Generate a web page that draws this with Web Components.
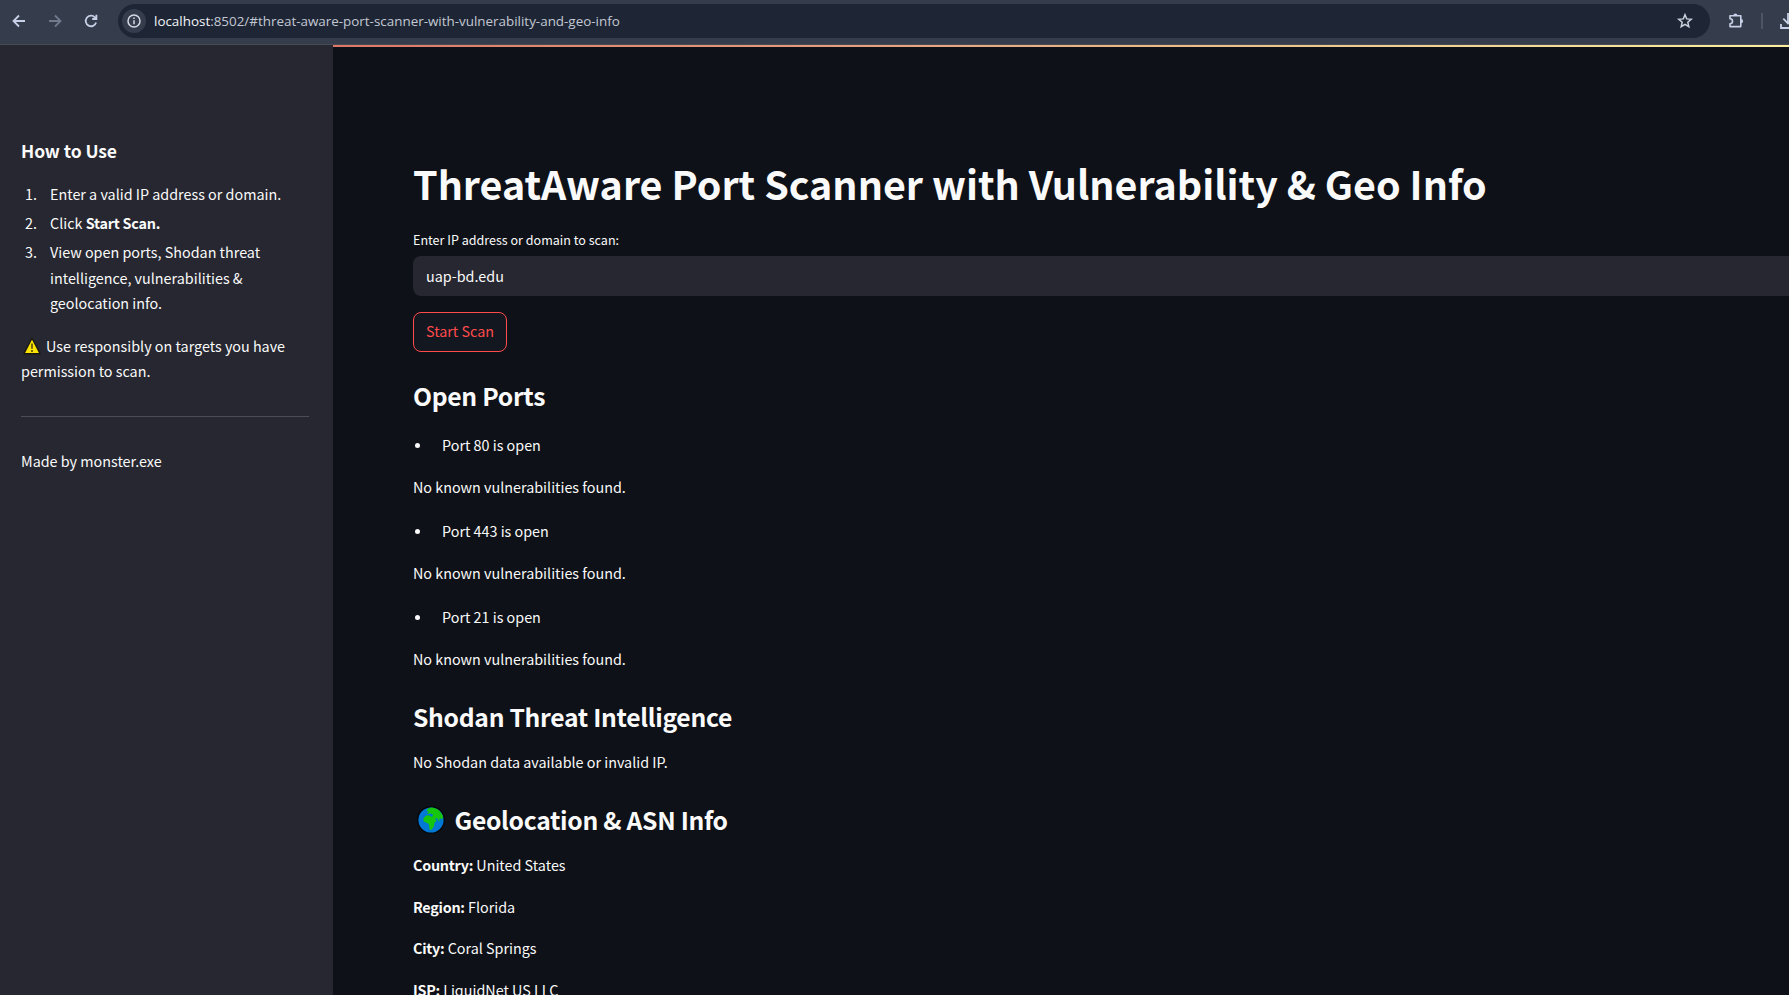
<!DOCTYPE html>
<html lang="en">
<head>
<meta charset="utf-8">
<title>ThreatAware Port Scanner</title>
<style>
html,body{margin:0;height:100%;overflow:hidden;background:#0e1117}
body{font-family:"Noto Sans CJK SC","Noto Sans",sans-serif;color:#fafafa;font-size:14.35px;line-height:26px}
</style>
</head>
<body>
<scan-app></scan-app>
<script>
const define = (name, html) => {
  const t = document.createElement('template');
  t.innerHTML = html;
  customElements.define(name, class extends HTMLElement {
    constructor() { super(); this.attachShadow({mode: 'open'}).append(t.content.cloneNode(true)); }
  });
};

define('browser-bar', `
<style>
:host{display:flex;align-items:center;height:45px;box-sizing:border-box;background:#353d4d;border-bottom:1px solid #464b56;padding-bottom:3px;overflow:hidden}
svg{display:block;flex:none}
.nav{display:flex;gap:18px;padding-left:10px;color:#c7d0e6}
.fwd{color:#717a8c}
.url{display:flex;align-items:center;width:1592px;height:34px;margin-left:18px;border-radius:17px;background:#1e2636;flex:none;box-sizing:border-box;padding:0 16px 0 4px}
.info{display:grid;place-items:center;width:24px;height:24px;border-radius:50%;background:#353d4d;color:#d5d9e4;margin-right:8px}
.txt{flex:1;font:13.42px/20px "Open Sans",sans-serif;color:#c3c8d2;white-space:nowrap}
.txt b{font-weight:400;color:#f2f4f8}
.ext{margin-left:17px;color:#c7d0e6}
.sep{width:2px;height:16px;background:#4d5667;margin-left:16px;flex:none}
.dl{margin-left:16px;color:#c7d0e6}
</style>
<div class="nav">
<svg width="18" height="18" viewBox="0 0 18 18" fill="none" stroke="currentColor" stroke-width="1.8"><path d="M15 9H4M9 3.5 3.5 9 9 14.5"/></svg>
<svg class="fwd" width="18" height="18" viewBox="0 0 18 18" fill="none" stroke="currentColor" stroke-width="1.8"><path d="M3 9h11M9 3.5 14.500 9 9 14.5"/></svg>
<svg width="18" height="18" viewBox="0 0 18 18" fill="none" stroke="currentColor" stroke-width="1.8"><path d="M14.100 10.500A5.300 5.300 0 1 1 12.900 5.300L14.200 6.700M14.400 2.800V7H10.200"/></svg>
</div>
<div class="url">
<span class="info"><svg width="14" height="14" viewBox="0 0 14 14" fill="none" stroke="currentColor" stroke-width="1.5"><circle cx="7" cy="7" r="6"/><path d="M7 6.200v4M7 3.600v1.500"/></svg></span>
<span class="txt"><b>localhost</b>:8502/#threat-aware-port-scanner-with-vulnerability-and-geo-info</span>
<svg width="18" height="18" viewBox="0 0 18 18" fill="none" stroke="#cbd1dd" stroke-width="1.5"><path d="m9 2.800 1.700 4.100 4.500.4-3.400 2.900 1 4.400L9 12.300l-3.800 2.300 1-4.400L2.800 7.300l4.500-.4z"/></svg>
</div>
<svg class="ext" width="18" height="18" viewBox="0 0 18 18"><path d="M3 3.800H13.800V14.600H3V11.700A2.500 2.500 0 0 0 3 6.700Z" fill="none" stroke="currentColor" stroke-width="1.6" stroke-linejoin="round"/><path d="M6.300 3.500a2.100 2.100 0 0 1 4.200 0zM14 7.100a2.100 2.100 0 0 1 0 4.200z" fill="currentColor"/></svg>
<span class="sep"></span>
<svg class="dl" width="18" height="18" viewBox="0 0 18 18" fill="none" stroke="currentColor" stroke-width="1.8"><path d="M9 1v10M4.300 6.700 9 11.400l4.700-4.700M2 12v4h14v-4"/></svg>
`);

define('side-panel', `
<style>
:host{display:block;width:333px;flex:none;box-sizing:border-box;background:#262730;padding:92px 24px 0 21px}
h3{margin:0;font-size:17.5px;line-height:28px;font-weight:700;letter-spacing:-.1px}
ol{list-style:none;margin:16px 0 0;padding:0}
li{display:grid;grid-template-columns:29px 1fr;line-height:25.400px;margin-bottom:3.700px}
li i{font-style:normal;padding-left:4px}
b{font-weight:700;letter-spacing:-.22px}
p{margin:0;line-height:25px;white-space:nowrap}
.warn{margin-top:17.300px}
svg{width:20px;height:20px;vertical-align:-4.500px;margin:0 4px 0 1px}
hr{border:0;height:1px;background:#4b4c54;margin:33px 0 31px}
</style>
<h3>How to Use</h3>
<ol>
<li><i>1.</i><span>Enter a valid IP address or domain.</span></li>
<li><i>2.</i><span>Click <b>Start Scan.</b></span></li>
<li><i>3.</i><span>View open ports, Shodan threat<br>intelligence, vulnerabilities &amp;<br>geolocation info.</span></li>
</ol>
<p class="warn"><svg viewBox="0 0 18 18"><path d="M9 2 16.300 16H1.700Z" fill="#fde300" stroke="#1b1a12" stroke-width="1.300" stroke-linejoin="round"/><path d="M9 6.800v4.600M9 12.700v1.600" stroke="#4e480c" stroke-width="1.400"/></svg>Use responsibly on targets you have<br>permission to scan.</p>
<hr>
<p>Made by monster.exe</p>
`);

define('page-heading', `
<style>
:host{display:block;height:36px;margin-top:var(--gap,23px)}
h2{margin:0;font-size:24.700px;line-height:36px;font-weight:700;letter-spacing:-.3px;white-space:nowrap;display:flex;align-items:center}
::slotted(svg){width:28px;height:28px;margin:2px 9.500px 0 4px}
</style>
<h2><slot></slot></h2>
`);

define('text-line', `
<style>
:host{display:block;line-height:26px;height:26px;margin-top:var(--gap,15.600px);white-space:nowrap}
::slotted(b){font-weight:700;letter-spacing:-.25px}
</style>
<slot></slot>
`);

define('port-result', `
<style>
:host{display:block;margin-top:var(--gap,18.600px)}
.port{display:flex;align-items:center;height:26px}
.port::before{content:"";width:5px;height:5px;border-radius:50%;background:#fafafa;margin:1px 22px 0 2px}
text-line{--gap:15.600px}
</style>
<div class="port"><slot></slot></div>
<text-line>No known vulnerabilities found.</text-line>
`);

define('scan-form', `
<style>
:host{display:block}
label{display:block;margin-top:17px;font-size:12.550px;line-height:20px}
.field{height:40px;margin-top:6px;box-sizing:border-box;padding-left:13px;border-radius:8px 0 0 8px;background:#262730;line-height:39px}
button{display:block;width:94px;height:40px;margin-top:16px;padding:0 0 2px;box-sizing:border-box;border:1px solid #ff4b4b;border-radius:8px;background:#131720;color:#ff4b4b;font:inherit;line-height:36px;white-space:nowrap}
</style>
<label>Enter IP address or domain to scan:</label>
<div class="field">uap-bd.edu</div>
<button>Start Scan</button>
`);

define('scan-app', `
<style>
:host{display:flex;flex-direction:column;height:100vh;overflow:hidden}
.body{display:flex;flex:1;min-height:0}
main{flex:1;min-width:0;padding-left:80px;overflow:hidden}
.line{height:2px;margin-left:-80px;background:linear-gradient(90deg,#dd7867,#e59e7c 35%,#ecc58d 65%,#faf0a0)}
h1{margin:106px 0 0;font-size:39.430px;line-height:60px;font-weight:700;white-space:nowrap}
</style>
<browser-bar></browser-bar>
<div class="body">
<side-panel></side-panel>
<main>
<div class="line"></div>
<h1>ThreatAware Port Scanner with Vulnerability &amp; Geo Info</h1>
<scan-form></scan-form>
<page-heading style="--gap:25px">Open Ports</page-heading>
<port-result style="--gap:19px">Port 80 is open</port-result>
<port-result>Port 443 is open</port-result>
<port-result>Port 21 is open</port-result>
<page-heading style="--gap:26px">Shodan Threat Intelligence</page-heading>
<text-line style="--gap:15px">No Shodan data available or invalid IP.</text-line>
<page-heading style="--gap:26px"><svg viewBox="0 0 28 28"><circle cx="14" cy="14" r="13.300" fill="#0078d4" stroke="#05070b" stroke-width="1.400"/><path d="M10.500 3Q14-.2 20 3q4.500 2.800 6 8l-.8 2.500-2.400-1.600-.7 4.100-2.100-4-2.200.9 2 1.600-2.200 2.300-.8 3.700-2.500 3.500-1.700-.5-.8-5.500-2.800-1.600-2.300-1-.4-3 2.500-2.700 3.200-.4 2.800 1.600 1.500-2.200-2.800-1.100-3.600.5 1.700-2.500-2-.7z" fill="#16c60c"/></svg>Geolocation &amp; ASN Info</page-heading>
<text-line style="--gap:15px"><b>Country:</b> United States</text-line>
<text-line><b>Region:</b> Florida</text-line>
<text-line><b>City:</b> Coral Springs</text-line>
<text-line><b>ISP:</b> LiquidNet US LLC</text-line>
</main>
</div>
`);
</script>
</body>
</html>
